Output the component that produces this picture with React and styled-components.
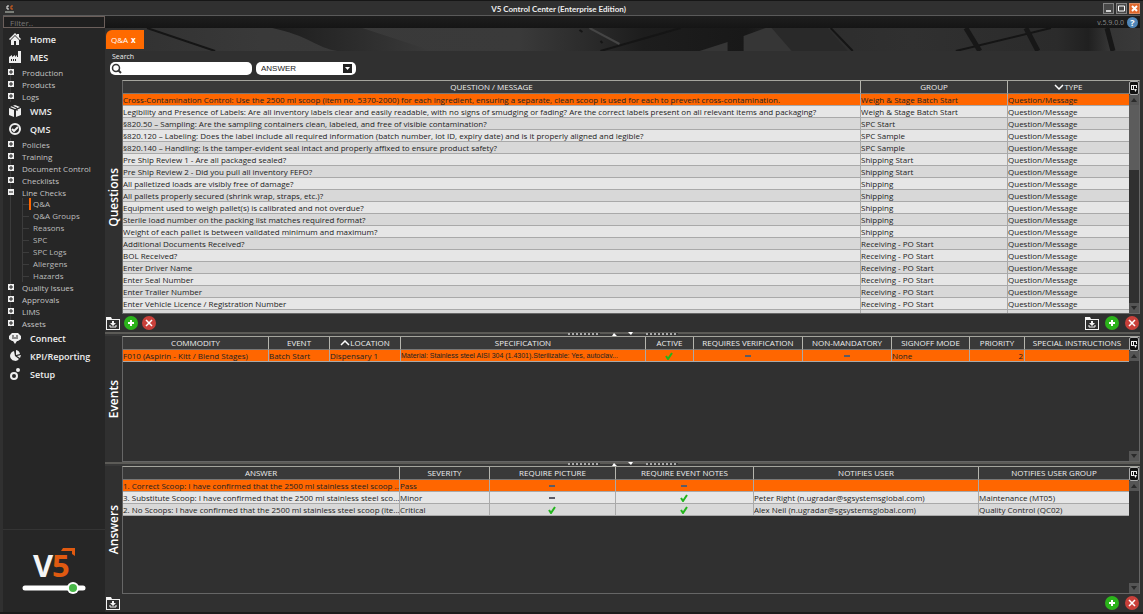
import React, { useState } from "react";
import styled, { createGlobalStyle, css } from "styled-components";

const GlobalStyle = createGlobalStyle`
  * {
    box-sizing: border-box;
  }
  body {
    margin: 0;
    background: #1e1e1e;
    color: #eeeeee;
    font-family: "Open Sans", sans-serif;
    font-size: 8px;
  }
  button, input, select {
    font: inherit;
    color: inherit;
    margin: 0;
  }
  button {
    padding: 0;
    border: 0;
    background: none;
    cursor: pointer;
  }
  h1, h2, ul {
    margin: 0;
    padding: 0;
    font-weight: normal;
  }
  ul {
    list-style: none;
  }
  svg {
    display: block;
  }
`;

const navigation = [
  { name: "Home", icon: "home" },
  { name: "MES", icon: "factory", items: ["Production", "Products", "Logs"] },
  { name: "WMS", icon: "box" },
  {
    name: "QMS",
    icon: "check",
    items: [
      "Policies",
      "Training",
      "Document Control",
      "Checklists",
      "Line Checks",
      "Quality Issues",
      "Approvals",
      "LIMS",
      "Assets",
    ],
  },
  { name: "Connect", icon: "connect" },
  { name: "KPI/Reporting", icon: "pie" },
  { name: "Setup", icon: "gears" },
];

const lineChecks = ["Q&A", "Q&A Groups", "Reasons", "SPC", "SPC Logs", "Allergens", "Hazards"];

const questionColumns = [
  { label: "QUESTION / MESSAGE", width: 738 },
  { label: "GROUP", width: 147 },
  { label: "TYPE", width: 122, sort: "down" },
];

const questions = [
  ["Cross-Contamination Control: Use the 2500 ml scoop (item no. 5370-2000) for each ingredient, ensuring a separate, clean scoop is used for each to prevent cross-contamination.", "Weigh & Stage Batch Start"],
  ["Legibility and Presence of Labels: Are all inventory labels clear and easily readable, with no signs of smudging or fading? Are the correct labels present on all relevant items and packaging?", "Weigh & Stage Batch Start"],
  ["§820.50 – Sampling: Are the sampling containers clean, labeled, and free of visible contamination?", "SPC Start"],
  ["§820.120 – Labeling: Does the label include all required information (batch number, lot ID, expiry date) and is it properly aligned and legible?", "SPC Sample"],
  ["§820.140 – Handling: Is the tamper-evident seal intact and properly affixed to ensure product safety?", "SPC Sample"],
  ["Pre Ship Review 1 - Are all packaged sealed?", "Shipping Start"],
  ["Pre Ship Review 2 - Did you pull all inventory FEFO?", "Shipping Start"],
  ["All palletized loads are visibly free of damage?", "Shipping"],
  ["All pallets properly secured (shrink wrap, straps, etc.)?", "Shipping"],
  ["Equipment used to weigh pallet(s) is calibrated and not overdue?", "Shipping"],
  ["Sterile load number on the packing list matches required format?", "Shipping"],
  ["Weight of each pallet is between validated minimum and maximum?", "Shipping"],
  ["Additional Documents Received?", "Receiving - PO Start"],
  ["BOL Received?", "Receiving - PO Start"],
  ["Enter Driver Name", "Receiving - PO Start"],
  ["Enter Seal Number", "Receiving - PO Start"],
  ["Enter Trailer Number", "Receiving - PO Start"],
  ["Enter Vehicle Licence / Registration Number", "Receiving - PO Start"],
  ["Any signs of animal infestation?", "Receiving - PO Complete"],
].map((row) => [...row, "Question/Message"]);

const eventColumns = [
  { label: "COMMODITY", width: 146 },
  { label: "EVENT", width: 61 },
  { label: "LOCATION", width: 71, sort: "up" },
  { label: "SPECIFICATION", width: 245, plain: true },
  { label: "ACTIVE", width: 48 },
  { label: "REQUIRES VERIFICATION", width: 109 },
  { label: "NON-MANDATORY", width: 89 },
  { label: "SIGNOFF MODE", width: 78 },
  { label: "PRIORITY", width: 55, align: "right" },
  { label: "SPECIAL INSTRUCTIONS", width: 105 },
];

const events = [
  [
    "F010 (Aspirin - Kitt / Blend Stages)",
    "Batch Start",
    "Dispensary 1",
    "Material: Stainless steel AISI 304 (1.4301).Sterilizable: Yes, autoclav...",
    true,
    false,
    false,
    "None",
    "2",
    "",
  ],
];

const answerColumns = [
  { label: "ANSWER", width: 277 },
  { label: "SEVERITY", width: 90 },
  { label: "REQUIRE PICTURE", width: 126 },
  { label: "REQUIRE EVENT NOTES", width: 138 },
  { label: "NOTIFIES USER", width: 225 },
  { label: "NOTIFIES USER GROUP", width: 151 },
];

const answers = [
  ["1. Correct Scoop: I have confirmed that the 2500 ml stainless steel scoop ...", "Pass", false, false, "", ""],
  ["3. Substitute Scoop: I have confirmed that the 2500 ml stainless steel sco...", "Minor", false, true, "Peter Right (n.ugradar@sgsystemsglobal.com)", "Maintenance (MT05)"],
  ["2. No Scoops: I have confirmed that the 2500 ml stainless steel scoop (ite...", "Critical", true, true, "Alex Neil (n.ugradar@sgsystemsglobal.com)", "Quality Control (QC02)"],
];

const navIcons = {
  home: (
    <>
      <path d="M0 6 6 0l2 2V1h2v3l2 2-1 1-5-5-5 5z" />
      <path d="M2 7 6 3l4 4v5H7V8H5v4H2z" />
    </>
  ),
  factory: <path fillRule="evenodd" d="M0 12V6l3-2v2l3-2v2l2-2V6h1V0h3v12zM2 8v2h1V8zm2 0v2h1V8zm2 0v2h1V8z" />,
  box: (
    <>
      <path d="m6 0 5 2-5 2-5-2zM0 3l5 2v7l-5-2zM12 3 7 5v7l5-2z" />
      <path d="m3 1 5 2v3" stroke="#262626" fill="none" />
    </>
  ),
  check: (
    <>
      <circle cx="6" cy="6" r="5" fill="none" stroke="currentColor" strokeWidth="2" />
      <path d="m3 6 2 2 4-4" fill="none" stroke="currentColor" strokeWidth="2" />
    </>
  ),
  connect: (
    <>
      <path d="M3 1h6l3 3v3L9 9H8l-2 3-2-3H3L0 7V4z" />
      <path d="M3 4h2m2 0h2M3 6h6" stroke="#262626" />
    </>
  ),
  pie: (
    <>
      <path d="M5 1a5 5 0 1 0 5 8L6 6z" />
      <path d="M7 0v5l4-1a5 5 0 0 0-4-4zM8 6l3 2 1-3z" />
    </>
  ),
  gears: (
    <g fill="none" stroke="currentColor">
      <circle cx="5" cy="8" r="3" strokeWidth="2" />
      <circle cx="9" cy="2" r="1" strokeWidth="2" />
    </g>
  ),
};

const NavIcon = ({ name }) => (
  <svg width="12" height="12" viewBox="0 0 12 12" fill="currentColor" aria-hidden="true">
    {navIcons[name]}
  </svg>
);

const TickIcon = () => (
  <svg width="8" height="8" viewBox="0 0 8 8" role="img" aria-label="Yes">
    <path d="m1 4 2 3 4-6" fill="none" stroke="#22b51c" strokeWidth="2" />
  </svg>
);

const DashIcon = () => (
  <svg width="6" height="2" viewBox="0 0 6 2" role="img" aria-label="No">
    <path d="M0 1h6" stroke="#5b5b66" strokeWidth="2" />
  </svg>
);

const FolderIcon = () => (
  <svg width="14" height="13" viewBox="0 0 14 13" aria-hidden="true">
    <path d="M0 0h5l1 2h8v11H0z" fill="#f4f4f4" />
    <path d="M1 3h12v9H1z" fill="#303030" />
    <path d="M6 4h2v2h2L7 9 4 6h2z" fill="#f4f4f4" />
    <path d="M4 8v2h6V8" fill="none" stroke="#f4f4f4" />
  </svg>
);

const AddIcon = () => (
  <svg width="14" height="14" viewBox="0 0 14 14" aria-hidden="true">
    <circle cx="7" cy="7" r="7" fill="#2bb31b" />
    <path d="M7 4v6M4 7h6" stroke="#fff" strokeWidth="2" />
  </svg>
);

const DeleteIcon = () => (
  <svg width="14" height="14" viewBox="0 0 14 14" aria-hidden="true">
    <circle cx="7" cy="7" r="7" fill="#c9403a" />
    <path d="m4 4 6 6m0-6-6 6" stroke="#fff" strokeWidth="1.5" />
  </svg>
);

const SortIcon = ({ direction }) => (
  <svg width="10" height="6" viewBox="0 0 10 6" aria-hidden="true">
    <path d={direction === "up" ? "m1 5 4-4 4 4" : "m1 1 4 4 4-4"} fill="none" stroke="#fff" strokeWidth="1.5" />
  </svg>
);

const ScrollArrow = ({ up }) => (
  <svg width="6" height="4" viewBox="0 0 6 4" aria-hidden="true">
    <path d={up ? "M0 4h6L3 0z" : "M0 0h6L3 4z"} fill="#2a2a2a" />
  </svg>
);

const Cell = ({ value }) => {
  if (value === true) return <TickIcon />;
  if (value === false) return <DashIcon />;
  return value;
};

const DataTable = ({ name, columns, rows, thumb }) => {
  const [selected, setSelected] = useState(0);

  return (
    <TableFrame>
      <TableClip>
        <Table aria-label={name}>
          <colgroup>
            {columns.map((column) => (
              <col key={column.label} width={column.width} />
            ))}
          </colgroup>
          <thead>
            <tr>
              {columns.map((column) => (
                <th key={column.label}>
                  <HeadLabel>
                    {column.sort && <SortIcon direction={column.sort} />}
                    {column.label}
                  </HeadLabel>
                </th>
              ))}
            </tr>
          </thead>
          <tbody>
            {rows.map((row, index) => (
              <Row key={row[0]} $selected={index === selected} onClick={() => setSelected(index)}>
                {row.map((value, i) => (
                  <Data
                    key={columns[i].label}
                    $plain={columns[i].plain}
                    $align={columns[i].align}
                    $mark={typeof value === "boolean"}
                  >
                    <Cell value={value} />
                  </Data>
                ))}
              </Row>
            ))}
          </tbody>
        </Table>
      </TableClip>
      <ScrollColumn>
        <ColumnControl type="button" aria-label={`${name} columns`}>
          <svg width="6" height="7" viewBox="0 0 6 7" aria-hidden="true">
            <path d="M0 0h6v1H0zM0 1h1v4H0zM2 1h1v3H2zM5 1h1v2H5zM0 4h3v1H0zM3 4h3L4.500 7z" fill="#eee" />
          </svg>
        </ColumnControl>
        <ScrollButton type="button" aria-label={`Scroll ${name} up`}>
          <ScrollArrow up />
        </ScrollButton>
        <Track>{thumb && <Thumb />}</Track>
        <ScrollButton type="button" aria-label={`Scroll ${name} down`}>
          <ScrollArrow />
        </ScrollButton>
      </ScrollColumn>
    </TableFrame>
  );
};

const Splitter = () => (
  <SplitBar role="separator">
    <Dots />
    <svg width="24" height="4" viewBox="0 0 24 4" aria-hidden="true">
      <path d="M1 4h5L3 1zM17 0h5l-2 3z" fill="#fff" />
    </svg>
    <Dots />
  </SplitBar>
);

const Banner = () => (
  <BannerArt viewBox="0 0 1034 23" preserveAspectRatio="none" aria-hidden="true">
    <defs>
      <linearGradient id="ceiling">
        <stop offset="0" stopColor="#303030" />
        <stop offset="0.150" stopColor="#393939" />
        <stop offset="0.400" stopColor="#3a3a3a" />
        <stop offset="0.470" stopColor="#2a2a2a" />
        <stop offset="0.520" stopColor="#1d1d1d" />
        <stop offset="0.620" stopColor="#181818" />
        <stop offset="0.660" stopColor="#2c2c2c" />
        <stop offset="0.780" stopColor="#303030" />
        <stop offset="0.920" stopColor="#2b2b2b" />
        <stop offset="0.950" stopColor="#202020" />
        <stop offset="0.970" stopColor="#353535" />
        <stop offset="1" stopColor="#393939" />
      </linearGradient>
      <linearGradient id="shade">
        <stop offset="0" stopColor="#1d1d1d" />
        <stop offset="1" stopColor="#3a3a3a" />
      </linearGradient>
    </defs>
    <path d="M0 0h1034v23H0z" fill="url(#ceiling)" />
    <path d="M167 0h90l70 23h-95c-20-3-30-16-65-23z" fill="url(#shade)" />
    <path d="m660 0 22 23h60L722 0z" fill="#292929" />
    <path d="m42 0 68 23M495 23l80-23M725 0l22 23M850 23l95-23" stroke="#151515" strokeWidth="2" fill="none" />
    <path d="m860 0 14 23m46-23 12 23m69-23 6 23" stroke="#171717" strokeWidth="5" />
    <path d="m484 0 30 16" stroke="#454545" strokeWidth="2" />
    <path d="m594 23 28-9v9zM638 8l22-8h6l20 23h-48z" fill="#363636" />
    <path d="m474 2 3 2m18 9 2 2" stroke="#151515" strokeWidth="2" />
  </BannerArt>
);

const Sidebar = () => {
  const [current, setCurrent] = useState("Q&A");

  return (
    <Side aria-label="Modules">
      <Filter aria-label="Filter" placeholder="Filter.." />
      <ul>
        {navigation.map((section) => (
          <li key={section.name}>
            <Category type="button">
              <NavIcon name={section.icon} />
              {section.name}
            </Category>
            {section.items && (
              <Branch>
                {section.items.map((item) => (
                  <li key={item}>
                    <Item type="button">
                      <Toggle>
                        <svg width="6" height="6" viewBox="0 0 6 6" aria-hidden="true">
                          <path d="M0 0h6v6H0z" fill="#f0f0f0" />
                          <path d={item === "Line Checks" ? "M1 3h4" : "M1 3h4M3 1v4"} stroke="#222" />
                        </svg>
                      </Toggle>
                      {item}
                    </Item>
                    {item === "Line Checks" && (
                      <SubBranch>
                        {lineChecks.map((name) => (
                          <li key={name}>
                            <SubItem type="button" $active={name === current} onClick={() => setCurrent(name)}>
                              <span>{name}</span>
                            </SubItem>
                          </li>
                        ))}
                      </SubBranch>
                    )}
                  </li>
                ))}
              </Branch>
            )}
          </li>
        ))}
      </ul>
      <LogoArea>
        <svg width="64" height="64" viewBox="0 0 64 64" role="img" aria-label="V5">
          <text x="11" y="41" fill="#f4f4f4" fontFamily="Open Sans" fontWeight="700" fontSize="31">V</text>
          <text x="30" y="41" fill="#e05a10" fontFamily="Open Sans" fontWeight="700" fontSize="31">5</text>
          <path d="M41 12h12v8l-3-2v-3H39z" fill="#e05a10" />
          <path d="M3 52h58" stroke="#fff" strokeWidth="5" strokeLinecap="round" />
          <circle cx="51" cy="52" r="6" fill="#fff" />
          <circle cx="51" cy="52" r="4" fill="#48b848" />
        </svg>
      </LogoArea>
    </Side>
  );
};

const App = () => {
  return (
    <Window>
      <GlobalStyle />
      <TitleBar>
        <AppMark>
          <svg width="9" height="8" viewBox="0 0 9 8" aria-hidden="true">
            <path d="M4 1H2v3h2" stroke="#eee" fill="none" />
            <path d="M8 1H6v3h2" stroke="#e2611c" fill="none" />
            <path d="M0 7h9" stroke="#c4ccc0" />
          </svg>
        </AppMark>
        <h1>V5 Control Center (Enterprise Edition)</h1>
        <WindowButtons>
          <WindowButton type="button" aria-label="Minimize">
            <svg width="9" height="9" viewBox="0 0 9 9"><path d="M2 7h5" stroke="#fff" strokeWidth="1.5" /></svg>
          </WindowButton>
          <WindowButton type="button" aria-label="Maximize">
            <svg width="9" height="9" viewBox="0 0 9 9"><path d="M1.500 2h6v5h-6z" stroke="#fff" fill="none" /></svg>
          </WindowButton>
          <WindowButton type="button" aria-label="Close" $close>
            <svg width="9" height="9" viewBox="0 0 9 9"><path d="m2 2 5 5m0-5-5 5" stroke="#fff" strokeWidth="2" /></svg>
          </WindowButton>
        </WindowButtons>
      </TitleBar>
      <Body>
        <Sidebar />
        <Main>
          <VersionBar>
            <span>v.5.9.0.0</span>
            <HelpButton type="button" aria-label="Help">?</HelpButton>
          </VersionBar>
          <TabStrip>
            <Banner />
            <Tab>
              Q&amp;A
              <button type="button" aria-label="Close tab">x</button>
            </Tab>
          </TabStrip>
          <SearchArea>
            <label htmlFor="search">Search</label>
            <SearchFields>
              <SearchBox>
                <svg width="11" height="11" viewBox="0 0 11 11" aria-hidden="true">
                  <circle cx="5" cy="5" r="3.500" fill="none" stroke="#333" strokeWidth="1.5" />
                  <path d="m7 7 3 3" stroke="#333" strokeWidth="2" />
                </svg>
                <input id="search" type="text" />
              </SearchBox>
              <SelectBox>
                <select aria-label="Search in" defaultValue="ANSWER">
                  <option>ANSWER</option>
                  <option>QUESTION</option>
                </select>
                <svg width="9" height="9" viewBox="0 0 9 9" aria-hidden="true">
                  <path d="M0 0h9v9H0z" fill="#222" />
                  <path d="M2 3h5L4.500 6z" fill="#fff" />
                </svg>
              </SelectBox>
            </SearchFields>
          </SearchArea>
          <Panel $grow={252}>
            <Rail>Questions</Rail>
            <DataTable name="Questions" columns={questionColumns} rows={questions} thumb />
            <Tools>
              <div>
                <button type="button" aria-label="Export questions"><FolderIcon /></button>
                <button type="button" aria-label="Add question"><AddIcon /></button>
                <button type="button" aria-label="Delete question"><DeleteIcon /></button>
              </div>
              <div>
                <button type="button" aria-label="Export events"><FolderIcon /></button>
                <button type="button" aria-label="Add event"><AddIcon /></button>
                <button type="button" aria-label="Delete event"><DeleteIcon /></button>
              </div>
            </Tools>
          </Panel>
          <Splitter />
          <Panel $grow={126}>
            <Rail>Events</Rail>
            <DataTable name="Events" columns={eventColumns} rows={events} />
          </Panel>
          <Splitter />
          <Panel $grow={146}>
            <Rail>Answers</Rail>
            <DataTable name="Answers" columns={answerColumns} rows={answers} />
            <Tools>
              <div>
                <button type="button" aria-label="Export answers"><FolderIcon /></button>
              </div>
              <div>
                <button type="button" aria-label="Add answer"><AddIcon /></button>
                <button type="button" aria-label="Delete answer"><DeleteIcon /></button>
              </div>
            </Tools>
          </Panel>
        </Main>
      </Body>
    </Window>
  );
};

const Window = styled.div`
  display: flex;
  flex-direction: column;
  height: 100vh;
  padding: 1px 3px 0;
  background: #303030;
  border-top: 1px solid #161616;
  border-bottom: 2px solid #1a1a1a;
`;

const TitleBar = styled.header`
  display: flex;
  align-items: center;
  height: 14px;
  flex: none;
  border-bottom: 1px solid #5a5a5a;

  h1 {
    flex: 1;
    font-family: Lato, sans-serif;
    font-size: 8px;
    font-weight: bold;
    line-height: 12px;
    text-align: center;
  }
`;

const AppMark = styled.div`
  padding-left: 2px;
`;

const WindowButtons = styled.div`
  display: flex;
  gap: 2px;
`;

const WindowButton = styled.button`
  width: 11px;
  height: 11px;
  border: 1px solid ${({ $close }) => ($close ? "#d98b62" : "#858585")};
  background: ${({ $close }) => ($close ? "#e0682c" : "#484848")};
`;

const Body = styled.div`
  display: flex;
  flex: 1;
  min-height: 0;
`;

const Side = styled.nav`
  display: flex;
  flex-direction: column;
  width: 102px;
  flex: none;
  background: #262626;
`;

const Filter = styled.input`
  height: 12px;
  margin-bottom: 2px;
  padding: 0 6px;
  border: 1px solid #6b5f5b;
  background: #1f1f1f;
  outline: none;

  &::placeholder {
    color: #777777;
  }
`;

const Category = styled.button`
  display: flex;
  align-items: center;
  gap: 9px;
  width: 100%;
  height: 18px;
  padding-left: 6px;
  font-size: 9px;
  font-weight: 600;
`;

const Branch = styled.ul`
  background: linear-gradient(#3c3c3c, #3c3c3c) 7px 0 / 1px 100% no-repeat;
`;

const Item = styled.button`
  display: flex;
  align-items: center;
  width: 100%;
  height: 12px;
  padding-left: 5px;
  color: #c4c4c4;
`;

const Toggle = styled.span`
  width: 14px;
`;

const SubBranch = styled.ul`
  margin: 0 0 -1px 19px;
  border-left: 1px solid #3c3c3c;
`;

const SubItem = styled.button`
  display: flex;
  align-items: center;
  height: 12px;
  line-height: 12px;
  color: #bbbbbb;

  &::before {
    content: "";
    width: 6px;
    border-top: 1px solid #3c3c3c;
  }
  span {
    padding-left: 2px;
    border-left: 2px solid ${({ $active }) => ($active ? "#ff6600" : "transparent")};
  }
`;

const LogoArea = styled.div`
  display: flex;
  justify-content: center;
  margin-top: auto;
  padding: 6px 0 12px;
  border-top: 1px solid #343434;
`;

const Main = styled.main`
  display: flex;
  flex-direction: column;
  flex: 1;
  min-width: 0;
`;

const VersionBar = styled.div`
  display: flex;
  align-items: center;
  justify-content: flex-end;
  gap: 3px;
  height: 12px;
  flex: none;
  padding-right: 2px;
  background: linear-gradient(#1e1e1e, #151515);
  color: #8b8b8b;
  font-size: 7px;
`;

const HelpButton = styled.button`
  width: 11px;
  height: 11px;
  border-radius: 50%;
  background: #5086b8;
  color: #ffffff;
  font-weight: bold;
  font-size: 9px;
  line-height: 11px;
`;

const TabStrip = styled.div`
  position: relative;
  display: flex;
  align-items: center;
  height: 23px;
  flex: none;
  padding-left: 1px;
`;

const BannerArt = styled.svg`
  position: absolute;
  inset: 0;
  width: 100%;
  height: 100%;
`;

const Tab = styled.div`
  position: relative;
  display: flex;
  align-items: center;
  gap: 3px;
  height: 19px;
  padding: 0 8px 0 5px;
  border-radius: 6px 0 0 0;
  background: #ff6a00;
  color: #ffffff;

  button {
    font-weight: bold;
  }
`;

const SearchArea = styled.div`
  display: flex;
  flex-direction: column;
  flex: none;
  padding: 0 5px 5px;

  label {
    padding-left: 2px;
    font-size: 7px;
    line-height: 11px;
  }
`;

const SearchFields = styled.div`
  display: flex;
  gap: 4px;
`;

const field = css`
  display: flex;
  align-items: center;
  height: 13px;
  border-radius: 5px;
  background: #ffffff;
  color: #222222;
`;

const SearchBox = styled.div`
  ${field}
  width: 142px;
  padding-left: 1px;

  input {
    flex: 1;
    min-width: 0;
    height: 11px;
    padding: 0 3px;
    border: 0;
    outline: none;
    background: transparent;
  }
`;

const SelectBox = styled.div`
  ${field}
  position: relative;
  width: 100px;

  select {
    width: 100%;
    height: 13px;
    padding: 0 5px;
    border: 0;
    outline: none;
    appearance: none;
    background: transparent;
    font-family: "Liberation Sans", sans-serif;
    font-size: 8px;
  }
  svg {
    position: absolute;
    right: 4px;
    pointer-events: none;
  }
`;

const Panel = styled.section`
  display: grid;
  grid-template-columns: 17px minmax(0, 1fr);
  grid-template-rows: minmax(0, 1fr) auto;
  flex: ${({ $grow }) => $grow} 1 0;
  min-height: 0;
`;

const Rail = styled.h2`
  align-self: center;
  writing-mode: vertical-rl;
  transform: rotate(180deg);
  font-size: 12px;
  font-weight: 600;
  line-height: 17px;
  color: #ffffff;
`;

const Tools = styled.div`
  grid-column: 1 / -1;
  display: flex;
  justify-content: space-between;
  align-items: center;
  height: 18px;
  padding: 0 1px;

  div {
    display: flex;
    align-items: center;
    gap: 4px;
  }
  div:last-child {
    gap: 6px;
  }
`;

const TableFrame = styled.div`
  display: flex;
  min-width: 0;
  min-height: 0;
  border: 1px solid #666666;
  border-top-color: #a5a59e;
`;

const TableClip = styled.div`
  flex: 1;
  min-width: 0;
  overflow: hidden;
`;

const Table = styled.table`
  width: 100%;
  table-layout: fixed;
  border-collapse: separate;
  border-spacing: 0;

  th {
    height: 13px;
    padding: 0;
    border-right: 1px solid #b5b5ae;
    border-bottom: 1px solid #777777;
    background: #393939;
    font-weight: normal;
    line-height: 12px;
  }
`;

const HeadLabel = styled.span`
  display: flex;
  align-items: center;
  justify-content: center;
  white-space: nowrap;
`;

const Data = styled.td`
  height: 12px;
  padding: 0 1px 0 0;
  overflow: hidden;
  border-right: 1px solid #a9a9a9;
  border-bottom: 1px solid #a9a9a9;
  line-height: 11px;
  white-space: nowrap;
  text-align: ${({ $align }) => $align || "left"};

  ${({ $plain }) =>
    $plain &&
    css`
      font-family: "Liberation Sans", sans-serif;
      font-size: 7px;
    `}
  ${({ $mark }) =>
    $mark &&
    css`
      svg {
        margin: 0 auto;
      }
    `}
`;

const Row = styled.tr`
  color: #222222;
  background: #d8d8d8;

  &:nth-child(even) {
    background: #e6e6e6;
  }
  ${({ $selected }) =>
    $selected &&
    css`
      &&& {
        background: #ff6600;
      }
    `}
`;

const ScrollColumn = styled.div`
  display: flex;
  flex-direction: column;
  width: 10px;
  flex: none;
`;

const ColumnControl = styled.button`
  display: flex;
  align-items: center;
  justify-content: center;
  height: 14px;
  border: 1px solid #aaaaaa;
  border-radius: 2px;
  background: #111111;
`;

const ScrollButton = styled.button`
  display: flex;
  align-items: center;
  justify-content: center;
  height: 10px;
  background: #555555;
`;

const Track = styled.div`
  flex: 1;
`;

const Thumb = styled.div`
  height: 33%;
  background: #5c5c5c;
`;

const SplitBar = styled.div`
  display: flex;
  align-items: center;
  justify-content: center;
  gap: 11px;
  height: 4px;
  flex: none;
  background: linear-gradient(#5c5b57 2px, #383838 2px);
`;

const Dots = styled.span`
  width: 32px;
  height: 2px;
  background: repeating-linear-gradient(90deg, #aaaaaa 0 2px, #333333 2px 4px);
`;

export default App;
